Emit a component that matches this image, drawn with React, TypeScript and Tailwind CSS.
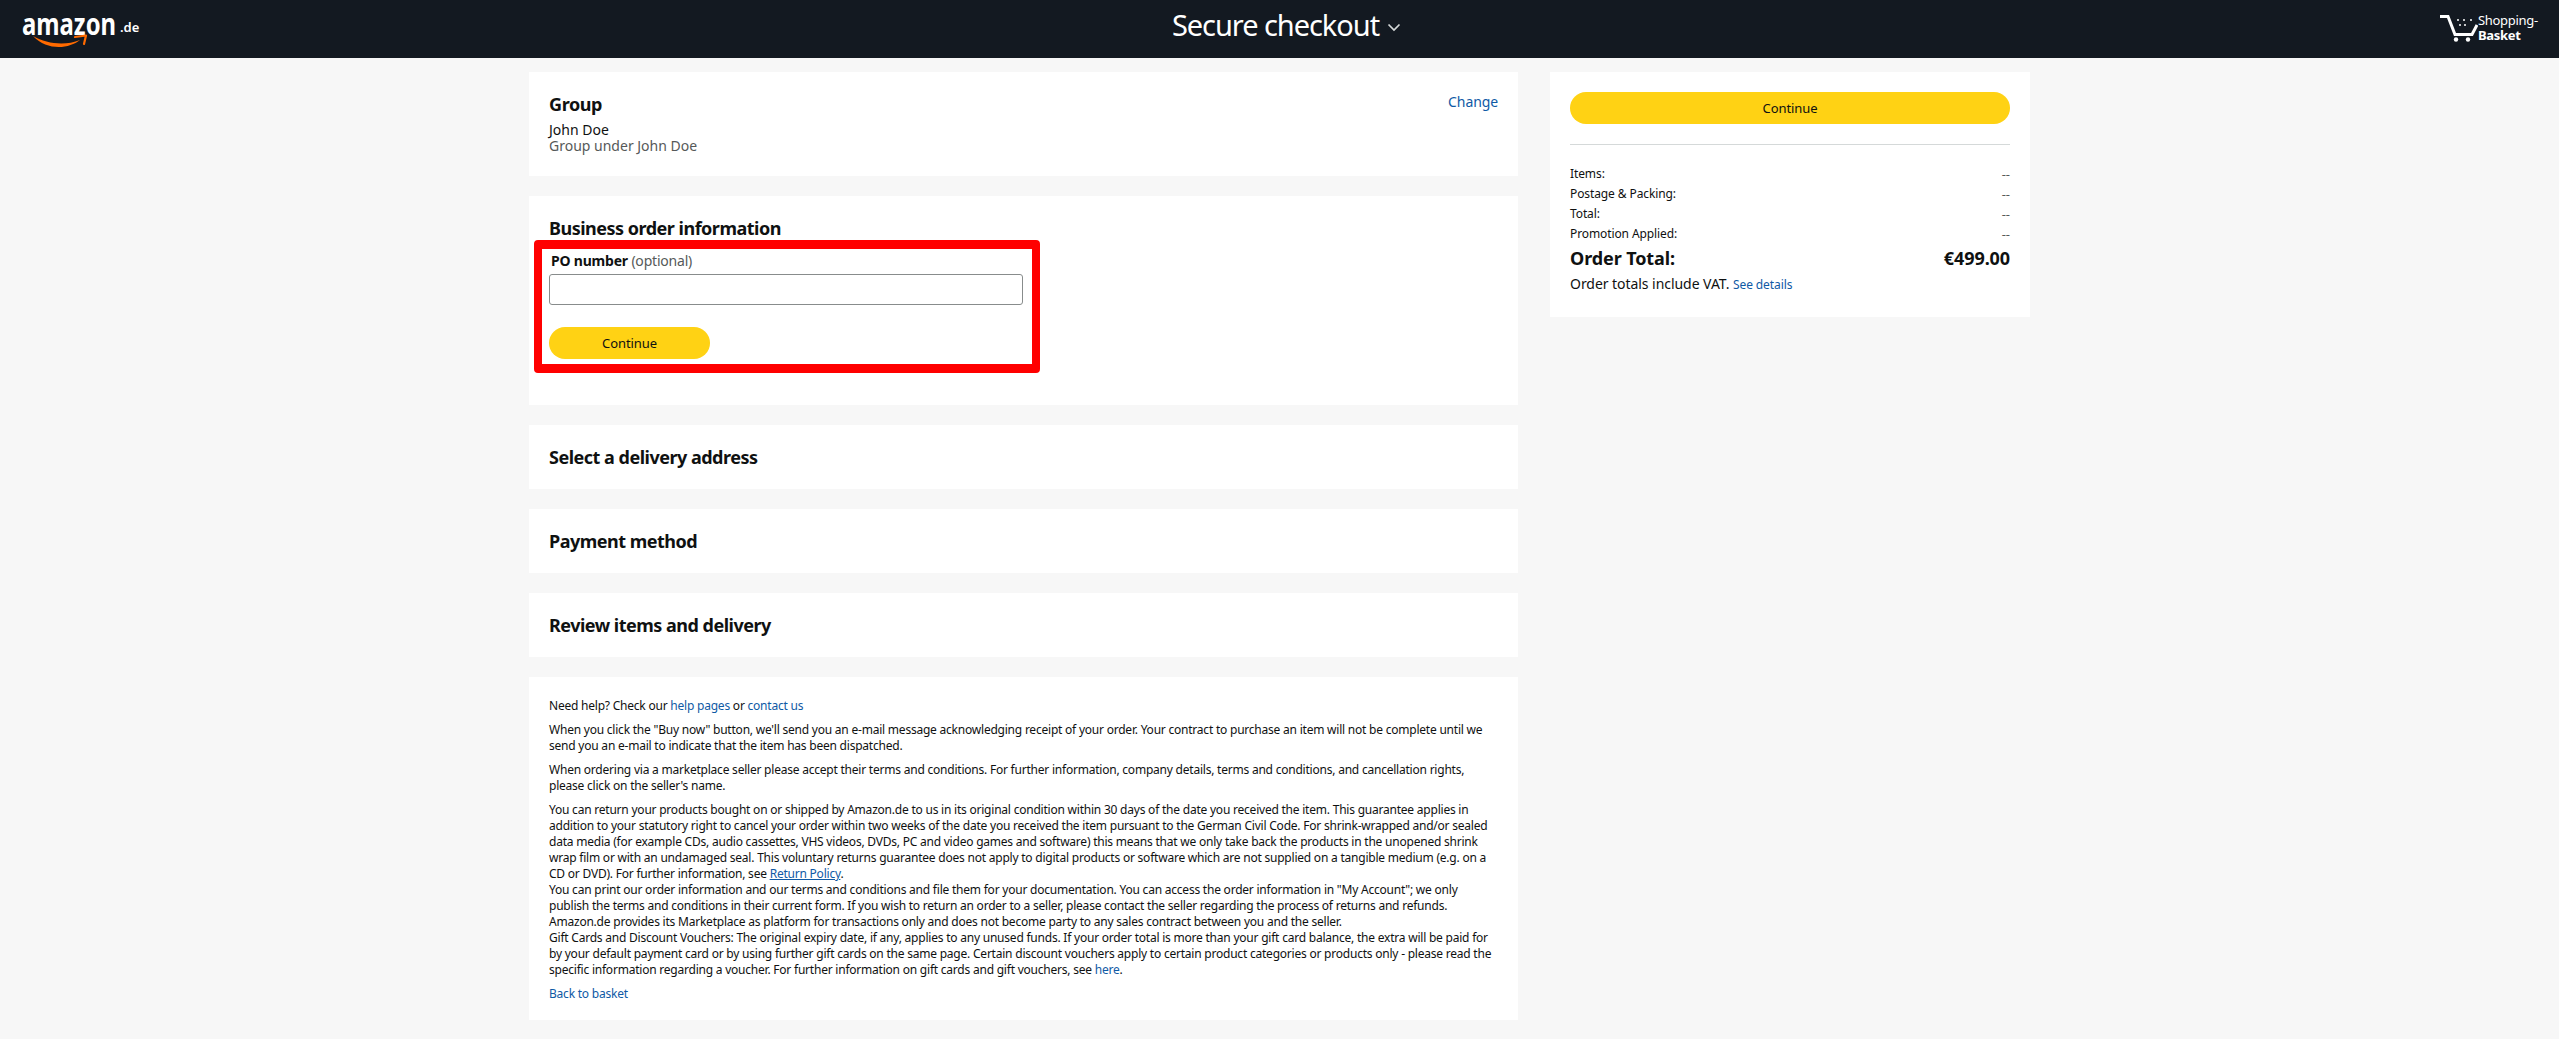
const summaryRows = ["Items:", "Postage & Packing:", "Total:", "Promotion Applied:"]

function Logo() {
  return (
    <div className="relative h-[58px] w-[111px] shrink-0">
      <span className="absolute left-0 top-[3px] origin-left scale-x-[0.77] text-[31px] font-bold leading-[40px]">amazon</span>
      <span className="absolute left-[98px] top-[18px] text-[13px] font-semibold leading-[18px]">.de</span>
      <svg className="absolute left-[11px] top-[34px]" width="56" height="16" viewBox="0 0 56 16" fill="none">
        <path d="M0 2 C14 10 32 12 47 6 C36 15 14 17 0 2 Z" fill="#ff6a00" />
        <path d="M42 3 L53 1.5 L51 10" stroke="#ff6a00" strokeWidth="2.2" strokeLinecap="round" strokeLinejoin="round" />
      </svg>
    </div>
  )
}

function Header() {
  return (
    <header className="flex h-[58px] items-center justify-between bg-[#131921] pl-[22px] pr-[24px] text-white">
      <Logo />
      <div className="flex items-center gap-[8px] pb-[8px]">
        <span className="text-[29px] leading-[36px] tracking-[-1.05px]">Secure checkout</span>
        <svg className="mt-[4px]" width="14" height="9" viewBox="0 0 14 9" fill="none">
          <path d="M1.5 1.5 L7 7 L12.5 1.5" stroke="#d5d9d9" strokeWidth="1.7" />
        </svg>
      </div>
      <div className="flex items-center">
        <svg width="38" height="28" viewBox="0 0 38 28" fill="none">
          <path d="M0 1.5 H8 L15 19.5 H32 L37 10" stroke="#fff" strokeWidth="3" />
          <circle cx="16" cy="24.5" r="2.2" fill="#fff" />
          <circle cx="28" cy="24.5" r="2.2" fill="#fff" />
          <circle cx="18" cy="5" r="1" fill="#fff" />
          <circle cx="24" cy="5" r="1" fill="#fff" />
          <circle cx="31" cy="5" r="1" fill="#fff" />
          <circle cx="20" cy="10" r="1" fill="#fff" />
          <circle cx="25" cy="10" r="1" fill="#fff" />
        </svg>
        <div className="-mt-[2px] w-[57px] text-[13px] leading-[15px] tracking-[-0.3px]">
          <div>Shopping-</div>
          <div className="font-bold">Basket</div>
        </div>
      </div>
    </header>
  )
}

function CollapsedStep({ title }: { title: string }) {
  return (
    <section className="flex h-[64px] items-center bg-white px-[20px]">
      <h2 className="text-[18px] font-bold leading-[24px] tracking-[-0.5px]">{title}</h2>
    </section>
  )
}

function YellowButton({ className }: { className: string }) {
  return (
    <button className={"flex h-[32px] items-center justify-center rounded-full bg-[#ffd214] pt-[1px] text-[13px] tracking-[-0.1px] text-[#0f1111] " + className}>
      Continue
    </button>
  )
}

function LegalText() {
  return (
    <section className="bg-white px-[20px] pb-[18px] pt-[21px] text-[12px] leading-[16px] tracking-[-0.22px]">
      <p>
        Need help? Check our <a className="text-[#0f5aa5]">help pages</a> or <a className="text-[#0f5aa5]">contact us</a>
      </p>
      <p className="mt-[8px]">
        When you click the "Buy now" button, we'll send you an e-mail message acknowledging receipt of your order. Your contract to purchase an item will not be complete until we send you an e-mail to indicate that the item has been dispatched.
      </p>
      <p className="mt-[8px]">
        When ordering via a marketplace seller please accept their terms and conditions. For further information, company details, terms and conditions, and cancellation rights, please click on the seller's name.
      </p>
      <p className="mt-[8px]">
        You can return your products bought on or shipped by Amazon.de to us in its original condition within 30 days of the date you received the item. This guarantee applies in addition to your statutory right to cancel your order within two weeks of the date you received the item pursuant to the German Civil Code. For shrink-wrapped and/or sealed data media (for example CDs, audio cassettes, VHS videos, DVDs, PC and video games and software) this means that we only take back the products in the unopened shrink wrap film or with an undamaged seal. This voluntary returns guarantee does not apply to digital products or software which are not supplied on a tangible medium (e.g. on a CD or DVD). For further information, see <a className="text-[#0f5aa5] underline">Return Policy</a>.
      </p>
      <p>
        You can print our order information and our terms and conditions and file them for your documentation. You can access the order information in "My Account"; we only publish the terms and conditions in their current form. If you wish to return an order to a seller, please contact the seller regarding the process of returns and refunds. Amazon.de provides its Marketplace as platform for transactions only and does not become party to any sales contract between you and the seller.
      </p>
      <p>
        Gift Cards and Discount Vouchers: The original expiry date, if any, applies to any unused funds. If your order total is more than your gift card balance, the extra will be paid for by your default payment card or by using further gift cards on the same page. Certain discount vouchers apply to certain product categories or products only - please read the specific information regarding a voucher. For further information on gift cards and gift vouchers, see <a className="text-[#0f5aa5]">here</a>.
      </p>
      <p className="mt-[8px]">
        <a className="text-[#0f5aa5]">Back to basket</a>
      </p>
    </section>
  )
}

export default function App() {
  return (
    <div className="min-h-[1057px] bg-white font-['Noto_Sans',sans-serif] text-[#0f1111]">
      <Header />
      <main className="flex h-[981px] justify-center gap-[32px] bg-[#f7f7f7] pt-[14px]">
        <div className="flex w-[989px] flex-col gap-[20px]">
          <section className="flex h-[104px] justify-between bg-white px-[20px] pt-[20px]">
            <div>
              <h2 className="text-[18px] font-bold leading-[24px] tracking-[-0.4px]">Group</h2>
              <p className="mt-[6px] text-[14px] leading-[16px]">John Doe</p>
              <p className="text-[14px] leading-[16px] text-[#565959]">Group under John Doe</p>
            </div>
            <a className="text-[14px] leading-[20px] tracking-[-0.1px] text-[#0f5aa5]">Change</a>
          </section>
          <section className="h-[209px] bg-white px-[20px] pt-[20px]">
            <h2 className="text-[18px] font-bold leading-[24px] tracking-[-0.5px]">Business order information</h2>
            <div className="-ml-[15px] h-[133px] w-[506px] rounded-[4px] border-x-[8px] border-y-[9px] border-[#ff0000] pl-[7px] pt-[2px]">
              <label className="block pl-[2px] text-[14px] leading-[20px] tracking-[-0.2px]">
                <span className="font-bold">PO number</span> <span className="text-[#565959]">(optional)</span>
              </label>
              <input className="mt-[3px] block h-[31px] w-[474px] rounded-[3px] border border-[#888c8c] bg-white" />
              <YellowButton className="mt-[22px] w-[161px]" />
            </div>
          </section>
          <CollapsedStep title="Select a delivery address" />
          <CollapsedStep title="Payment method" />
          <CollapsedStep title="Review items and delivery" />
          <LegalText />
        </div>
        <aside className="h-[245px] w-[480px] bg-white px-[20px] pt-[20px]">
          <YellowButton className="w-full" />
          <hr className="mt-[20px] border-[#d5d9d9]" />
          <dl className="mt-[19px] text-[12px] leading-[20px] tracking-[-0.1px]">
            {summaryRows.map((row) => (
              <div key={row} className="flex justify-between">
                <dt>{row}</dt>
                <dd className="text-[13px] tracking-normal text-[#565959]">--</dd>
              </div>
            ))}
          </dl>
          <div className="mt-[1px] flex justify-between text-[18px] font-bold leading-[26px] tracking-[-0.1px]">
            <span>Order Total:</span>
            <span>€499.00</span>
          </div>
          <p className="mt-[1px] text-[14px] leading-[24px] tracking-[-0.05px]">
            Order totals include VAT. <a className="text-[12px] tracking-[-0.1px] text-[#0f5aa5]">See details</a>
          </p>
        </aside>
      </main>
    </div>
  )
}
